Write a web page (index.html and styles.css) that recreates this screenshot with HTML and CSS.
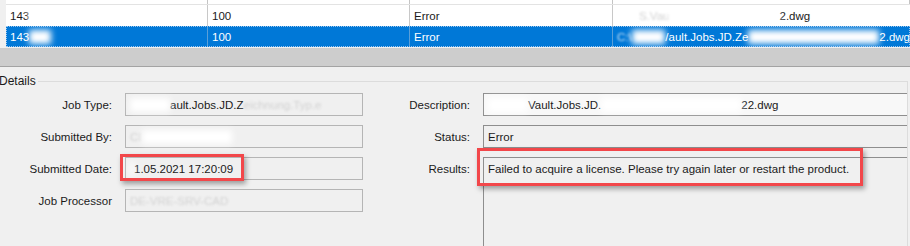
FILE: index.html
```html
<!DOCTYPE html>
<html lang="en">
  <head>
    <meta charset="UTF-8" />
    <title>Job Queue - Details</title>
    <link rel="stylesheet" href="styles.css">
  </head>
  <body>
    <div class="list">
      <div class="list-head">
        <span class="col"></span><span class="col"></span><span class="col"></span><span class="col"></span>
      </div>
      <div class="row">
        <div class="cell">143<span class="smudge w22"></span></div>
        <div class="cell">100</div>
        <div class="cell">Error</div>
        <div class="cell"><span class="smudge w22"></span><span class="faint">S.Vau</span><span class="smudge w110"></span>2.dwg</div>
      </div>
      <div class="row selected">
        <div class="cell">143<span class="smudge w22"></span></div>
        <div class="cell">100</div>
        <div class="cell">Error</div>
        <div class="cell"><span class="faint">C:\</span><span class="smudge w36"></span>/ault.Jobs.JD.Ze<span class="smudge w140"></span>2.dwg</div>
      </div>
    </div>
    <div class="splitter"></div>

    <fieldset class="details">
      <legend>Details</legend>
      <div class="form">
        <label class="lbl left">Job Type:</label>
        <div class="box left"><span class="smudge w40"></span>ault.Jobs.JD.Z<span class="faint">eichnung.Typ.e</span></div>
        <label class="lbl right">Description:</label>
        <div class="box right wide light"><span class="smudge w40"></span>Vault.Jobs.JD.<span class="smudge w140"></span>22.dwg</div>

        <label class="lbl left">Submitted By:</label>
        <div class="box left"><span class="faint">CI</span><span class="smudge w90"></span></div>
        <label class="lbl right">Status:</label>
        <div class="box right wide">Error</div>

        <label class="lbl left">Submitted Date:</label>
        <div class="box left">
          <span class="smudge w4"></span>1.05.2021 17:20:09
          <span class="highlight date-mark"></span>
        </div>
        <label class="lbl right lbl-top">Results:</label>
        <div class="box right wide results">
          Failed to acquire a license. Please try again later or restart the product.
          <span class="highlight result-mark"></span>
        </div>

        <label class="lbl left">Job Processor</label>
        <div class="box left"><span class="faint">DE-VRE-SRV-CAD</span></div>
      </div>
    </fieldset>
  </body>
</html>
```

FILE: styles.css
```css
body {
  margin: 0;
  width: 910px;
  height: 246px;
  overflow: hidden;
  background: #f0f0f0;
  color: #1a1a1a;
  font-family: "Liberation Sans", Arial, sans-serif;
  font-size: 11.5px;
}

.list {
  padding-left: 6px;
  background: #f0f0f0;
}

.list-head,
.row {
  display: grid;
  grid-template-columns: 202px 202px 203px 1fr;
  background: white;
}

.list-head {
  height: 4px;
  border-bottom: 1px solid #e3e3e3;
}

.list-head .col {
  border-right: 1px solid #c4c4c4;
}

.row {
  height: 21px;
  align-items: center;
}

.cell {
  height: 100%;
  display: flex;
  align-items: center;
  padding-left: 4px;
  border-right: 1px solid #c8c8c8;
  white-space: nowrap;
  overflow: hidden;
}

.cell:last-child {
  border-right: none;
}

.row.selected {
  background: #0078d7;
  color: white;
  outline: 1px dotted #9cc6ee;
  outline-offset: -1px;
}

.row.selected .cell {
  border-right-color: #5a9fd8;
}

.splitter {
  height: 18px;
  margin-top: 1px;
  background: #cdcdcd;
  border-bottom: 1px solid #a3a3a3;
}

.details {
  margin: 7px 0 0;
  padding: 0;
  width: 908px;
  box-sizing: border-box;
  border: none;
  border-top: 1px solid #dcdcdc;
  border-right: 1px solid #dcdcdc;
}

.details legend {
  padding: 0 2px 0 0;
  margin-left: -1px;
  font-size: 12px;
}

.form {
  display: grid;
  grid-template-columns: 125px 238px 120px 1fr;
  grid-template-rows: 23px 23px 23px 23px 40px;
  grid-auto-flow: row dense;
  row-gap: 9px;
  padding-top: 5px;
}

.lbl.left { grid-column: 1; }
.box.left { grid-column: 2; }
.lbl.right { grid-column: 3; }
.box.right { grid-column: 4; }

.lbl {
  display: flex;
  align-items: center;
  justify-content: flex-end;
  padding-right: 13px;
}

.lbl-top {
  align-items: flex-start;
  padding-top: 6px;
}

.box {
  position: relative;
  display: flex;
  align-items: center;
  padding-left: 4px;
  border: 1px solid #b5b5b5;
  background: #f0f0f0;
  white-space: nowrap;
}

.box.wide {
  border-color: #8e8e8e;
  border-right: none;
}

.box.light {
  background: #f8f8f8;
}

.box.results {
  grid-row: 3 / span 3;
  align-items: flex-start;
  padding-top: 5px;
  border-bottom: none;
}

.smudge {
  display: inline-block;
  height: 14px;
  background: white;
  filter: blur(3px);
}

.w4 { width: 4px; }
.w22 { width: 22px; }
.w36 { width: 36px; }
.w40 { width: 40px; }
.w90 { width: 90px; }
.w110 { width: 110px; }
.w140 { width: 140px; }

.faint {
  color: #d2d2d2;
  filter: blur(1px);
}

.row.selected .faint {
  color: #cfe4f7;
}

/* red annotation boxes drawn over the screenshot */
.highlight {
  position: absolute;
  box-sizing: border-box;
  border: 3px solid #f2474a;
  box-shadow: 2px 3px 5px rgba(0, 0, 0, 0.35);
}

.date-mark {
  left: -6px;
  top: -4px;
  width: 124px;
  height: 27px;
}

.result-mark {
  left: -7px;
  top: -10px;
  width: 386px;
  height: 38px;
}
```
